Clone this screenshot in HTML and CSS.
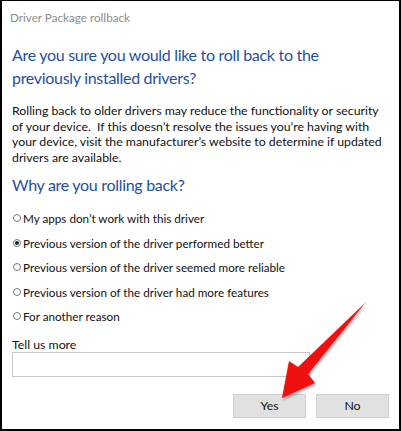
FILE: index.html
```html
<!DOCTYPE html>
<html>
<head>
<meta charset="utf-8">
<link rel="stylesheet" href="styles.css">
</head>
<body>
<div class="dialog">
  <div class="title">Driver Package rollback</div>
  <div class="content">
    <h1 class="heading">Are you sure you would like to roll back to the<br>previously installed drivers?</h1>
    <p class="desc">Rolling back to older drivers may reduce the functionality or security<br>of your device.&nbsp; If this doesn’t resolve the issues you’re having with<br>your device, visit the manufacturer’s website to determine if updated<br>drivers are available.</p>
    <h2 class="heading sub">Why are you rolling back?</h2>
    <ul class="options">
      <li class="option"><span class="radio"></span>My apps don’t work with this driver</li>
      <li class="option"><span class="radio checked"></span>Previous version of the driver performed better</li>
      <li class="option"><span class="radio"></span>Previous version of the driver seemed more reliable</li>
      <li class="option"><span class="radio"></span>Previous version of the driver had more features</li>
      <li class="option"><span class="radio"></span>For another reason</li>
    </ul>
    <div class="label">Tell us more</div>
    <div class="input"></div>
    <div class="buttons">
      <div class="btn">Yes</div>
      <div class="btn">No</div>
    </div>
  </div>
  <svg class="arrow" width="401" height="431" viewBox="0 0 401 431">
    <polygon points="366,302 308,374 315,383 282,398 289,361 298,367" fill="#f01010"/>
  </svg>
</div>
</body>
</html>
```
FILE: styles.css
```css
html, body {
  margin: 0;
  padding: 0;
  background: #fff;
}
.dialog {
  position: relative;
  width: 401px;
  height: 431px;
  box-sizing: border-box;
  border-top: 1px solid #000;
  border-left: 2px solid #000;
  border-right: 2px solid #000;
  border-bottom: 2px solid #000;
  font-family: "Lato", "Noto Sans", sans-serif;
  color: #111;
  overflow: hidden;
  white-space: nowrap;
}
.title {
  padding: 8px 0 0 8px;
  font-size: 11.7px;
  line-height: 16px;
  color: #8c8c8c;
}
.content {
  padding: 0 10px;
}
.heading {
  margin: 0;
  font-weight: normal;
  color: #1f4fa3;
  font-size: 16px;
  letter-spacing: -0.3px;
  line-height: 23px;
}
h1.heading {
  margin-top: 18px;
}
.desc {
  margin: 14px 0 0;
  font-size: 12.3px;
  line-height: 15.5px;
}
.sub {
  margin-top: 8px;
}
.options {
  list-style: none;
  margin: 10px 0 0;
  padding: 0;
}
.option {
  display: flex;
  align-items: center;
  gap: 2px;
  font-size: 11.7px;
  height: 24.5px;
}
.radio {
  width: 6px;
  height: 6px;
  border: 1px solid #777;
  border-radius: 50%;
  display: flex;
  align-items: center;
  justify-content: center;
  flex: none;
  margin-left: 1px;
}
.radio.checked::after {
  content: "";
  width: 4px;
  height: 4px;
  border-radius: 50%;
  background: #222;
}
.label {
  margin-top: 9px;
  font-size: 12.3px;
  line-height: 14px;
}
.input {
  margin-top: 0;
  width: 298px;
  height: 25px;
  box-sizing: border-box;
  border: 1px solid #c8c8c8;
}
.buttons {
  display: flex;
  justify-content: flex-end;
  gap: 10px;
  margin-top: 17px;
}
.btn {
  width: 73px;
  height: 24px;
  box-sizing: border-box;
  background: #e1e1e1;
  border: 1px solid #cfcfcf;
  font-size: 12.3px;
  display: flex;
  align-items: center;
  justify-content: center;
}
.arrow {
  position: absolute;
  left: -2px;
  top: -1px;
  filter: drop-shadow(1px 2px 1.5px rgba(0,0,0,0.35));
}
```
